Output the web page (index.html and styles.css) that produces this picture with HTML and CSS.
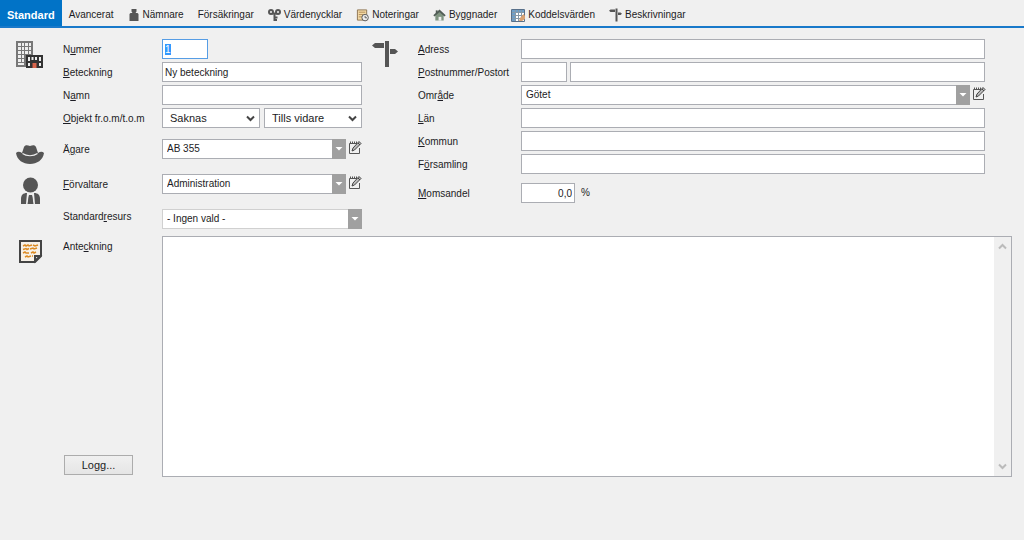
FILE: index.html
```html
<!DOCTYPE html>
<html lang="sv">
<head>
<meta charset="utf-8">
<title>Objekt</title>
<link rel="stylesheet" href="styles.css">
</head>
<body>
<svg class="defs" aria-hidden="true">
  <symbol id="sign" viewBox="0 0 26 26"><path fill="#555" d="M13 0h4v26h-4zM3 2h9v5H3L0 4.500zM18 8h5l3 2.500L23 13h-5z"/></symbol>
  <symbol id="edit" viewBox="0 0 14 15"><path fill="none" stroke="#555" d="M9 3.500H1.500v10h10V8"/><path fill="none" stroke="#555" stroke-dasharray="1 1" stroke-width="2" d="M2 2.500h8"/><path fill="#bbb" stroke="#444" d="M4 11l1-3 6-6.500 2 2-6.500 6.500zM10 3l2 2"/></symbol>
  <symbol id="down" viewBox="0 0 14 19"><path fill="#fff" d="M3.500 7.500h7L7 11z"/></symbol>
  <symbol id="chev" viewBox="0 0 9 7"><path fill="none" stroke="#444" stroke-width="2" d="M1 1.500L4.500 5 8 1.500"/></symbol>
</svg>

<nav class="tabs">
  <a class="tab active" href="#standard" aria-current="page">Standard</a>
  <a class="tab" href="#avancerat">Avancerat</a>
  <a class="tab" href="#namnare"><svg width="12" height="14" viewBox="0 0 11 14"><path fill="#555" d="M3 1h5v2.500L7 5h2l1 1v7H1V6l1-1h2L3 3.500z"/></svg>Nämnare</a>
  <a class="tab" href="#forsakringar">Försäkringar</a>
  <a class="tab" href="#vardenycklar"><svg width="13" height="14" viewBox="0 0 13 14"><g fill="none" stroke="#555" stroke-width="2"><circle cx="3" cy="4" r="2"/><circle cx="10" cy="4" r="2"/><path d="M4 5.500h5M6.500 5v8M7 9.500h2.500M7 12h2"/></g></svg>Värdenycklar</a>
  <a class="tab" href="#noteringar"><svg width="13" height="14" viewBox="0 0 14 14"><path fill="#f3d9a6" stroke="#8b7350" d="M1.500 1.500h10v11h-10z"/><path stroke="#b08d58" d="M3 4h7M3 6.500h6M3 9h4"/><circle cx="9.800" cy="9.800" r="3.500" fill="#eee" stroke="#555"/><path fill="none" stroke="#555" d="M9.800 8v2h2"/></svg>Noteringar</a>
  <a class="tab" href="#byggnader"><svg width="13" height="14" viewBox="0 0 14 14"><path fill="#7f9480" d="M2.500 7L7 3l4.500 4v6h-9z"/><path fill="none" stroke="#505c55" stroke-width="2" d="M1 8l6-5.500L13 8"/><path fill="#eee" d="M6 9h3v4H6z"/><path fill="#505c55" d="M3 2h2v3H3z"/></svg>Byggnader</a>
  <a class="tab" href="#koddelsvarden"><svg width="14" height="14" viewBox="0 0 14 14"><path fill="#fff" stroke="#58708a" d="M.5 1.500h13v12H.5z"/><path fill="#6f9fc8" d="M1 2h3v11H1zM4 2h9v2H4z"/><path stroke="#8799a8" d="M1 4.500h12M1 7.500h12M1 10.500h12M4.500 2v11M7.500 2v11M10.500 2v11"/><path fill="#d9a273" d="M8 13l1-3 3.500-4 1.500 2v3l-3 2z"/></svg>Koddelsvärden</a>
  <a class="tab" href="#beskrivningar"><svg width="13" height="14"><use href="#sign"/></svg>Beskrivningar</a>
</nav>

<form class="form">
  <div class="columns">
    <section class="panel panel-left">
      <div class="row">
        <svg class="icon" width="28" height="28" viewBox="0 0 28 28"><path fill="#777" d="M0 0h17v26H0z"/><path fill="#eee" d="M2 2h3v3H2zM6 2h2v3H6zM9 2h3v3H9zM13 2h2v3h-2zM2 6h3v3H2zM6 6h2v3H6zM9 6h3v3H9zM13 6h2v3h-2zM2 10h3v3H2zM6 10h2v3H6zM9 10h3v3H9zM13 10h2v3h-2zM2 14h3v3H2zM6 14h2v3H6zM2 18h3v3H2zM6 18h2v3H6zM2 22h6v2H2z"/><path fill="#333" d="M10 14h17v13H10z"/><path fill="#eee" d="M12 16h2v4h-2zM15.500 16h2v3h-2zM19 16h2v3h-2zM23 16h2v4h-2zM12 22h2v3h-2zM23 22h2v3h-2z"/><path fill="#d9654c" d="M16.500 22h4v5h-4z"/></svg>
        <label for="nummer">N<u>u</u>mmer</label>
        <input class="box short focused" id="nummer" value="1">
      </div>
      <div class="row"><label for="bet"><u>B</u>eteckning</label><input class="box" id="bet" value="Ny beteckning"></div>
      <div class="row"><label for="namn">N<u>a</u>mn</label><input class="box" id="namn"></div>
      <div class="row"><label for="from"><u>O</u>bjekt fr.o.m/t.o.m</label>
        <div class="pair">
          <span class="combo plain"><select class="box" id="from"><option>Saknas</option></select><svg width="9" height="7"><use href="#chev"/></svg></span>
          <span class="combo plain"><select class="box" aria-label="Objekt t.o.m"><option>Tills vidare</option></select><svg width="9" height="7"><use href="#chev"/></svg></span>
        </div>
      </div>
      <div class="row owner">
        <svg class="icon" width="28" height="20" viewBox="0 0 28 20"><path fill="#555" d="M0 8c2-2 4-1 6 0l2-6c1-2 3-2 6-1 3-1 5-1 6 1l2 6c2-1 4-2 6 0-1 7-7 11-14 11S1 15 0 8z"/><path fill="none" stroke="#eee" stroke-width="1.200" d="M6.500 8.500c4 3 11 3 15 0"/></svg>
        <label for="agare">Ä<u>g</u>are</label>
        <div class="picker"><span class="combo"><select class="box" id="agare"><option>AB 355</option></select><svg width="14" height="19"><use href="#down"/></svg></span><button class="edit" type="button" aria-label="Redigera ägare"><svg width="14" height="15"><use href="#edit"/></svg></button></div>
      </div>
      <div class="row spaced">
        <svg class="icon" width="28" height="28" viewBox="0 0 28 28"><circle cx="14.500" cy="8" r="7.500" fill="#555"/><path fill="#555" d="M5 27v-5c0-4 2-6 6-6l3 2 4-2c4 0 6 2 6 6v5z"/><path fill="#eee" d="M11 16h7l1 11h-1.500L16 18h-3l-1.500 9H10z"/><path fill="#555" d="M13 18h3l1 7-2.500 2-2.500-2z"/></svg>
        <label for="forv"><u>F</u>örvaltare</label>
        <div class="picker"><span class="combo"><select class="box" id="forv"><option>Administration</option></select><svg width="14" height="19"><use href="#down"/></svg></span><button class="edit" type="button" aria-label="Redigera förvaltare"><svg width="14" height="15"><use href="#edit"/></svg></button></div>
      </div>
      <div class="row spaced"><label class="high" for="resurs">Standard<u>r</u>esurs</label><span class="combo light"><select class="box" id="resurs"><option>- Ingen vald -</option></select><svg width="14" height="19"><use href="#down"/></svg></span></div>
    </section>

    <section class="panel panel-right">
      <div class="row"><svg class="icon" width="26" height="26"><use href="#sign"/></svg><label for="adress"><u>A</u>dress</label><input class="box" id="adress"></div>
      <div class="row"><label for="postnr"><u>P</u>ostnummer/Postort</label><div class="post"><input class="box" id="postnr"><input class="box" aria-label="Postort"></div></div>
      <div class="row area"><label for="omrade">Omr<u>å</u>de</label><div class="picker"><span class="combo"><select class="box" id="omrade"><option>Götet</option></select><svg width="14" height="19"><use href="#down"/></svg></span><button class="edit" type="button" aria-label="Redigera område"><svg width="14" height="15"><use href="#edit"/></svg></button></div></div>
      <div class="row"><label for="lan"><u>L</u>än</label><input class="box" id="lan"></div>
      <div class="row"><label for="kommun"><u>K</u>ommun</label><input class="box" id="kommun"></div>
      <div class="row"><label for="forsamling">F<u>ö</u>rsamling</label><input class="box" id="forsamling"></div>
      <div class="row vat"><label for="moms"><u>M</u>omsandel</label><div class="percent"><input class="box" id="moms" value="0,0"><span>%</span></div></div>
    </section>
  </div>

  <div class="notes">
    <svg class="icon" width="28" height="28" viewBox="0 0 28 28"><path fill="#f7f1e8" stroke="#444" stroke-width="2" d="M4 3h21v15l-6 6H4z"/><path fill="#eee" stroke="#444" stroke-width="2" d="M24 18h-5v5z"/><path fill="none" stroke="#dc8b24" stroke-width="1.500" d="M7 8l2-1 1 1 2-1 1 1 3-1M17 7l2 1 3-1M7 11.500l3-1 1 1 2-1M14 11l3-1 1 1 3-1M7 15l2-1 1 1h3M15 15l2-1 1 1 2-1M9 19l2-1 1 1 3-1M16 18h1"/></svg>
    <div class="notes-side"><label for="note">Ante<u>c</u>kning</label><button class="log" type="button">Logg...</button></div>
    <div class="note-box">
      <textarea id="note"></textarea>
      <div class="scroll"><svg width="9" height="7" viewBox="0 0 9 7"><path fill="none" stroke="#bbb" stroke-width="2" d="M1 5.500L4.500 2 8 5.500"/></svg><svg width="9" height="7" viewBox="0 0 9 7"><path fill="none" stroke="#bbb" stroke-width="2" d="M1 1.500L4.500 5 8 1.500"/></svg></div>
    </div>
  </div>
</form>
<script src="form.js"></script>
</body>
</html>
```
FILE: styles.css
```css
* { box-sizing: border-box; }
body {
  margin: 0;
  background: #f0f0f0;
  color: #1c1c24;
  font: 10px/14px "Liberation Sans", Arial, sans-serif;
}
input, select, textarea, button { font: inherit; color: inherit; margin: 0; }
svg { display: block; flex: none; }
.defs { position: absolute; width: 0; height: 0; }

.tabs { display: flex; height: 28px; border-bottom: 2px solid #1979ca; }
.tab {
  display: flex;
  align-items: center;
  gap: 3px;
  padding: 4px 7px 0;
  color: inherit;
  text-decoration: none;
  white-space: nowrap;
}
.tab.active { background: #0173c7; color: #fff; font-size: 11px; font-weight: bold; }

.form { padding: 11px 12px 0 16px; }
.columns { display: flex; gap: 10px; }
.panel { display: flex; flex-direction: column; gap: 3px; }
.panel-left { width: 346px; flex: none; }
.panel-right { flex: 1; margin-right: 27px; }

.row { display: grid; grid-template-rows: 20px; align-items: center; height: 20px; }
.panel-left .row { grid-template-columns: 47px 99px 1fr; }
.panel-right .row { grid-template-columns: 46px 103px 1fr; }
.row > label { grid-column: 2; grid-row: 1; padding-top: 2px; }
.row > label.high { padding: 0 0 4px; }
.row > label + * { grid-column: 3; grid-row: 1; }
.icon { grid-column: 1; grid-row: 1; align-self: start; margin-top: 2px; }
.owner { margin-top: 8px; }
.owner .icon { margin-top: 6px; }
.spaced { margin-top: 12px; }
.spaced .icon { margin-top: 3px; }
.vat { margin-top: 6px; }

.box {
  width: 100%;
  min-width: 0;
  height: 20px;
  padding: 0 2px;
  border: 1px solid #abadb3;
  border-radius: 0;
  background: #fff;
  outline: none;
}
.short { width: 46px; }
.focused { border-color: #569de5; }
.focused::selection { background: #3399ff; color: #fff; }

.combo { display: grid; align-items: center; flex: 1; }
.combo > * { grid-area: 1 / 1; }
.combo select { appearance: none; padding-left: 4px; }
.combo svg { justify-self: end; height: 20px; background: #a0a0a0; pointer-events: none; }
.combo.light select { border-color: #d0d0d0; }
.combo.plain select { padding-left: 7px; font-size: 11px; }
.combo.plain svg { height: 7px; margin-right: 5px; background: none; }
.pair { display: flex; gap: 4px; }
.picker { display: flex; align-items: flex-start; gap: 2px; }
.edit { padding: 1px 0 0; border: 0; background: none; }
.area .picker { margin-right: -1px; }
.post { display: grid; grid-template-columns: 46px 1fr; gap: 3px; }
.percent { display: flex; align-items: center; gap: 6px; }
.percent .box { width: 54px; text-align: right; }

.notes { display: grid; grid-template-columns: 47px 99px 1fr; margin-top: 7px; }
.notes-side {
  display: flex;
  flex-direction: column;
  justify-content: space-between;
  align-items: flex-start;
  padding: 4px 0 2px;
}
.log {
  width: 69px;
  height: 20px;
  margin-left: 1px;
  padding: 0;
  border: 1px solid #acacac;
  background: linear-gradient(#f0f0f0, #e5e5e5);
  font-size: 11px;
}
.note-box { display: flex; height: 241px; border: 1px solid #abadb3; background: #fff; }
.note-box textarea { flex: 1; border: 0; resize: none; outline: none; background: none; }
.scroll {
  display: flex;
  flex-direction: column;
  justify-content: space-between;
  width: 17px;
  padding: 6px 4px;
  background: #f0f0f0;
}
```
FILE: form.js
```javascript
const first = document.getElementById("nummer");
first.focus();
first.select();
```
